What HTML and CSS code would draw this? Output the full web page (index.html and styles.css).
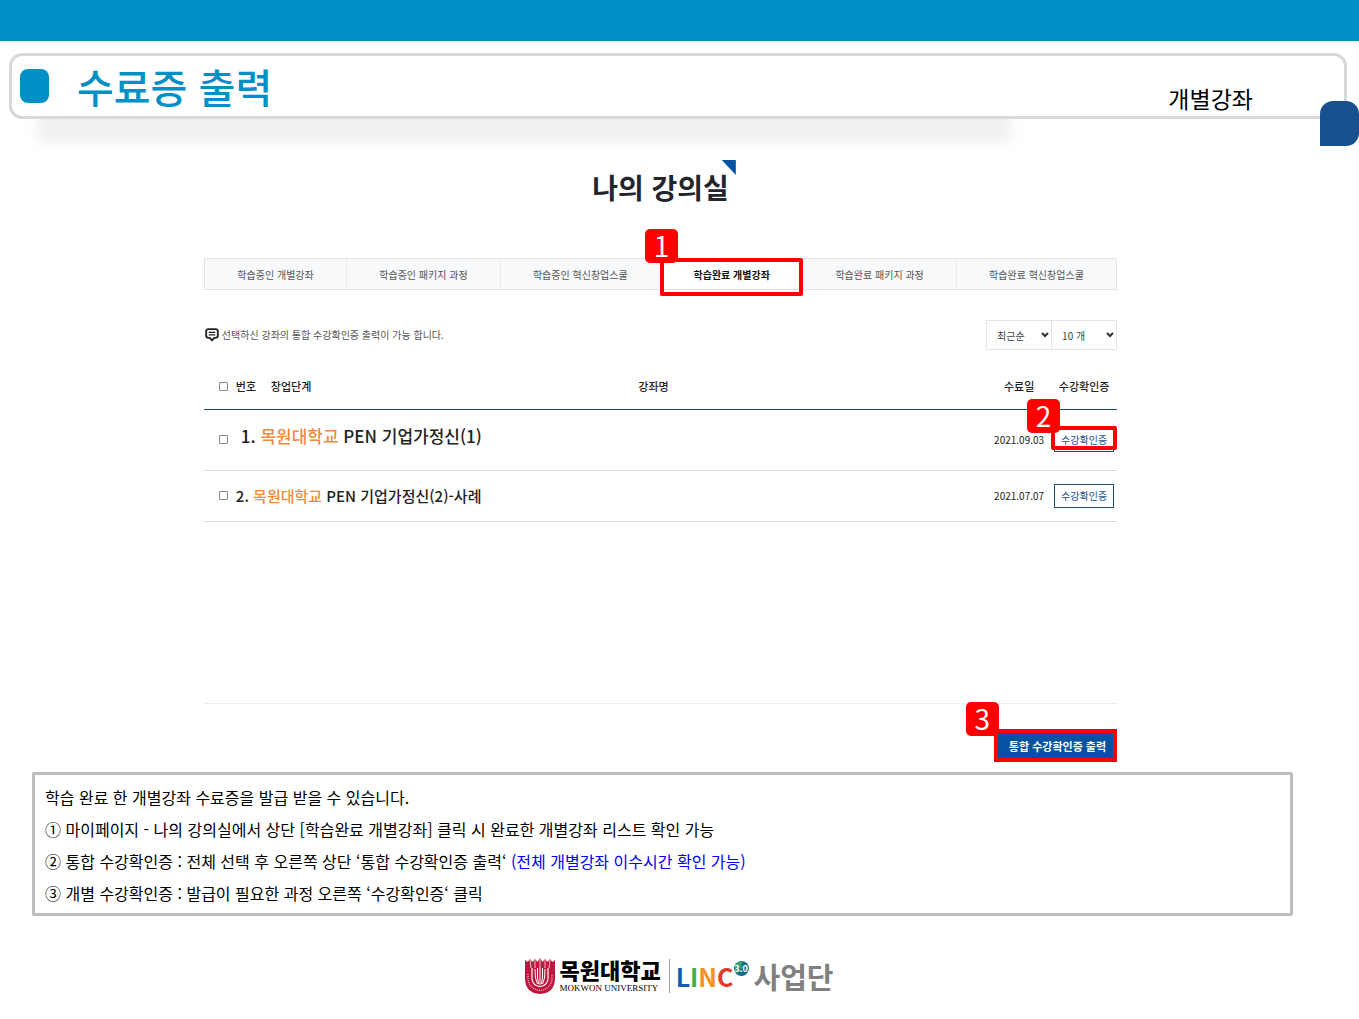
FILE: index.html
```html
<!DOCTYPE html>
<html lang="ko">
<head>
<meta charset="utf-8">
<meta name="viewport" content="width=device-width, initial-scale=1">
<title>수료증 출력</title>
<link rel="stylesheet" href="styles.css">
</head>
<body>
<div class="top-bar"></div>
<header class="title-panel">
  <span class="title-mark"></span>
  <h1 class="title">수료증 출력</h1>
  <p class="subtitle">개별강좌</p>
  <span class="corner-mark"></span>
</header>

<main>
  <section class="classroom">
    <h2 class="room-title"><span class="room-name">나의 강의실</span></h2>

    <nav class="tabs">
      <a class="tab tab-s" href="#">학습중인 개별강좌</a>
      <a class="tab tab-m" href="#">학습중인 패키지 과정</a>
      <a class="tab tab-l" href="#">학습중인 혁신창업스쿨</a>
      <a class="tab tab-s active" href="#">학습완료 개별강좌<span class="frame"><span class="badge">1</span></span></a>
      <a class="tab tab-m" href="#">학습완료 패키지 과정</a>
      <a class="tab tab-l" href="#">학습완료 혁신창업스쿨</a>
    </nav>

    <div class="toolbar">
      <svg class="note-icon" viewBox="0 0 12 12" aria-hidden="true"><path d="M3 1h6q2 0 2 2v3.500q0 2-2 2H8L6 10.500 4 8.500H3q-2 0-2-2V3q0-2 2-2z" fill="none" stroke="#222" stroke-width="1.600"/><path d="M3.200 3.800h5.600M3.200 5.900h5.600" stroke="#222" stroke-width="1"/></svg>
      <p class="note">선택하신 강좌의 통합 수강확인증 출력이 가능 합니다.</p>
      <div class="selects">
        <span class="select-box"><select aria-label="정렬"><option>최근순</option></select><svg class="chevron" viewBox="0 0 8 6" aria-hidden="true"><path d="M1 1l3 3 3-3" fill="none" stroke="#333" stroke-width="2"/></svg></span>
        <span class="select-box"><select aria-label="표시 개수"><option>10 개</option></select><svg class="chevron" viewBox="0 0 8 6" aria-hidden="true"><path d="M1 1l3 3 3-3" fill="none" stroke="#333" stroke-width="2"/></svg></span>
      </div>
    </div>

    <table class="courses">
      <colgroup><col class="c-check"><col class="c-no"><col class="c-step"><col><col class="c-date"><col class="c-cert"></colgroup>
      <thead>
        <tr>
          <th><input type="checkbox" aria-label="전체 선택"></th>
          <th>번호</th><th>창업단계</th><th class="name-head">강좌명</th><th class="date">수료일</th><th>수강확인증</th>
        </tr>
      </thead>
      <tbody>
        <tr class="row-first">
          <td><input type="checkbox" aria-label="1번 강좌 선택"></td>
          <td colspan="3" class="course">1. <em>목원대학교</em> PEN 기업가정신(1)</td>
          <td class="date">2021.09.03</td>
          <td><button type="button" class="cert">수강확인증<span class="frame"><span class="badge">2</span></span></button></td>
        </tr>
        <tr class="row-second">
          <td><input type="checkbox" aria-label="2번 강좌 선택"></td>
          <td colspan="3" class="course">2. <em>목원대학교</em> PEN 기업가정신(2)-사례</td>
          <td class="date">2021.07.07</td>
          <td><button type="button" class="cert">수강확인증</button></td>
        </tr>
      </tbody>
    </table>

    <div class="list-end">
      <button type="button" class="print">통합 수강확인증 출력<span class="frame"><span class="badge">3</span></span></button>
    </div>
  </section>

  <section class="guide">
    <p>학습 완료 한 개별강좌 수료증을 발급 받을 수 있습니다.</p>
    <p>① 마이페이지 - 나의 강의실에서 상단 [학습완료 개별강좌] 클릭 시 완료한 개별강좌 리스트 확인 가능</p>
    <p>② 통합 수강확인증 : 전체 선택 후 오른쪽 상단 ‘통합 수강확인증 출력‘ <span class="accent">(전체 개별강좌 이수시간 확인 가능)</span></p>
    <p>③ 개별 수강확인증 : 발급이 필요한 과정 오른쪽 ‘수강확인증‘ 클릭</p>
  </section>
</main>

<footer class="footer">
  <svg class="crest" viewBox="0 0 30 36" aria-hidden="true">
    <path d="M0 2l2.500 2L5 1l2.500 3L10 1l2.500 3L15 0l2.500 4L20 1l2.500 3L25 1l2.500 3L30 2v18q0 15-15 16Q0 35 0 20z" fill="#bd1740"/>
    <path d="M7 10v11q1 7 8 7.500 7-.5 8-7.500V10" fill="none" stroke="#fff" stroke-width="1.200"/>
    <path d="M3 16v5q1 10 12 11.500 11-1.500 12-11.500v-5" fill="none" stroke="#e9a5b4" stroke-width="1.500" stroke-dasharray="1 1"/>
    <path d="M10 11l.5 9 2 6M12.500 10v9l1 7M15 9v18M17.500 10v9l-1 7M20 11l-.5 9-2 6" fill="none" stroke="#fff" stroke-width="1"/>
    <path d="M5 2l1 8M10 2v8M15 1v8M20 2v8M25 2l-1 8" fill="none" stroke="#f6d3dc" stroke-width=".9"/>
  </svg>
  <div class="university">
    <span class="uni-ko">목원대학교</span>
    <span class="uni-en">MOKWON UNIVERSITY</span>
  </div>
  <div class="linc">
    <span class="linc-word"><span class="l-blue">L</span><span class="l-green">I</span><span class="l-orange">N</span><span class="l-red">C</span></span>
    <span class="globe"><svg viewBox="0 0 15 15" aria-hidden="true"><circle cx="7.500" cy="7.500" r="7.500" fill="#176b8d"/><path d="M1 4Q5-1 9 1L7 4 9 7 5 8 6 11 3 12Q-1 8 1 4zM11 3l3 2 1 4-3-1z" fill="#37a36c"/></svg><span class="globe-text">3.0</span></span>
    <span class="unit">사업단</span>
  </div>
</footer>
</body>
</html>
```
FILE: styles.css
```css
* { box-sizing: border-box; }

body {
  margin: 0;
  background: #fff;
  color: #000;
  font-family: "Noto Sans CJK KR", "Liberation Sans", sans-serif;
}

h1, h2, p { margin: 0; }

button, select, input { font-family: inherit; margin: 0; }

.top-bar { height: 41px; background: #0090c6; }

/* Title panel */
.title-panel {
  position: relative;
  display: flex;
  align-items: center;
  height: 66px;
  margin: 12px 12px 0 9px;
  padding: 0 91px 0 8px;
  border: 3px solid #d8d8d8;
  border-radius: 13px;
  background: #fff;
}

.title-panel::before {
  content: "";
  position: absolute;
  z-index: -1;
  left: 26px;
  right: 25%;
  top: 40px;
  height: 46px;
  background: #f0f0f0;
  filter: blur(6px);
}

.title-panel::after {
  content: "";
  position: absolute;
  z-index: -1;
  inset: 0;
  background: #fff;
}

.title-mark {
  width: 29px;
  height: 34px;
  border-radius: 8px;
  background: #0090c6;
}

.title {
  flex: 1;
  margin-left: 28px;
  color: #0090c6;
  font-size: 40px;
  line-height: 60px;
  font-weight: 500;
}

.subtitle {
  padding-top: 24px;
  font-size: 23px;
  line-height: 34px;
}

.corner-mark {
  position: absolute;
  right: -15px;
  bottom: -30px;
  width: 39px;
  height: 45px;
  border-radius: 13px 13px 13px 0;
  background: #184f8d;
}

/* Classroom page */
.classroom { margin: 41px 17.8% 0 15%; }

.room-title {
  text-align: center;
  font-size: 28px;
  line-height: 54px;
  font-weight: 700;
  color: #222529;
}

.room-name { position: relative; }

.room-name::after {
  content: "";
  position: absolute;
  right: -7px;
  top: -7px;
  width: 14px;
  height: 15px;
  background: #0453a3;
  clip-path: polygon(0 0, 100% 0, 100% 100%);
}

.tabs {
  display: flex;
  height: 32px;
  margin-top: 44px;
  border: 1px solid #e2e4e6;
  background: #f8f9fb;
}

.tab {
  flex: 142 1 0;
  border-right: 1px solid #e8eaec;
  color: #555;
  font-size: 10px;
  line-height: 32px;
  text-align: center;
  text-decoration: none;
  white-space: nowrap;
}

.tab-m { flex-grow: 153; }
.tab-l { flex-grow: 160; }
.tab:last-child { border-right: 0; }

.tab.active {
  position: relative;
  background: #fff;
  color: #111;
  font-weight: 700;
}

/* Red call-out frames and numbers */
.frame {
  position: absolute;
  inset: -1px -1px -7px -1px;
  border: 4px solid #f00;
  border-radius: 2px;
}

.badge {
  position: absolute;
  right: 100%;
  bottom: 100%;
  width: 33px;
  height: 34px;
  margin: 0 -14px -1px 0;
  border-radius: 5px;
  background: #f00;
  color: #fff;
  font-size: 28px;
  line-height: 33px;
  font-weight: 400;
  text-align: center;
}

.toolbar {
  display: flex;
  align-items: center;
  margin-top: 30px;
  color: #555;
}

.note-icon { width: 14px; height: 14px; margin-left: 1px; }

.note {
  flex: 1;
  margin-left: 3px;
  font-size: 10px;
  line-height: 16px;
}

.selects { display: flex; border: 1px solid #e2e4e6; }

.select-box {
  position: relative;
  width: 64px;
}

.select-box + .select-box { border-left: 1px solid #e2e4e6; width: 65px; }

.select-box select {
  display: block;
  width: 100%;
  height: 28px;
  padding: 0 0 0 10px;
  border: 0;
  background: transparent;
  color: #444;
  font-size: 10px;
  appearance: none;
}

.chevron {
  position: absolute;
  right: 2px;
  top: 11px;
  width: 8px;
  height: 6px;
}

.courses {
  width: 100%;
  margin-top: 14px;
  border-collapse: collapse;
  table-layout: fixed;
}

.c-check { width: 32px; }
.c-no { width: 31px; }
.c-step { width: 52px; }
.c-date { width: 75px; }
.c-cert { width: 66px; }

.courses th, .courses td { padding: 0; white-space: nowrap; }

.courses th {
  height: 45px;
  border-bottom: 1px solid #1b4b63;
  color: #222;
  font-size: 11px;
  font-weight: 500;
  text-align: left;
}

.courses th:nth-last-child(-n+2), .courses td:nth-last-child(-n+2) { text-align: center; }

.courses .name-head { padding-left: 12px; text-align: center; }
.courses th:nth-child(3) { padding-left: 4px; }
.courses .date { padding-left: 11px; }

.courses td {
  border-bottom: 1px solid #ddd;
  color: #222;
  font-size: 10px;
}

.courses input {
  display: block;
  width: 9px;
  height: 9px;
  margin-left: 15px;
  border: 1px solid #888;
  border-radius: 1px;
  appearance: none;
  background: #fff;
}

.row-first { height: 61px; }
.row-second { height: 51px; }

.courses .course { font-size: 15px; font-weight: 500; }
.courses .row-first .course { padding: 0 0 8px 5px; font-size: 17px; }

.course em { color: #ee8b3c; font-style: normal; }

.cert {
  position: relative;
  width: 60px;
  height: 24px;
  padding: 0;
  border: 1px solid #1b4b73;
  background: #fff;
  color: #1d4f8c;
  font-size: 10px;
}

.cert .frame { inset: -3px -4px 1px -4px; }
.cert .badge { margin: 0 -5px -3px 0; }

.list-end {
  display: flex;
  justify-content: flex-end;
  margin-top: 181px;
  padding-top: 25px;
  border-top: 1px solid #eee;
}

.print {
  position: relative;
  height: 33px;
  padding: 2px 11px 0 15px;
  border: 0;
  background: #0453a3;
  color: #fff;
  font-size: 11px;
  font-weight: 700;
}

.print .frame { inset: 0; }
.print .badge { margin: 0 -1px -3px 0; }

/* Step-by-step guide */
.guide {
  margin: 10px 66px 0 32px;
  padding: 6px 10px 4px;
  border: 3px solid #bdbdbd;
  border-radius: 2px;
  font-size: 16px;
  line-height: 32px;
}

.accent { color: #00f; }

/* Footer logos */
.footer {
  display: flex;
  justify-content: center;
  align-items: center;
  height: 36px;
  margin: 42px 0 24px;
}

.crest { width: 30px; height: 36px; }

.university {
  display: flex;
  flex-direction: column;
  margin-left: 4px;
  padding-right: 8px;
  border-right: 1px solid #999;
}

.uni-ko { font-size: 22px; line-height: 20px; font-weight: 900; }

.uni-en {
  margin-top: 5px;
  font-family: "Liberation Serif", serif;
  font-size: 9px;
  line-height: 9px;
}

.linc { display: flex; align-items: center; margin-left: 6px; }

.linc-word {
  font-size: 25px;
  line-height: 36px;
  font-weight: 700;
}

.l-blue { color: #145fa8; }
.l-green { color: #43ad49; }
.l-orange { color: #f4931e; }
.l-red { color: #df3a2b; }

.globe { position: relative; align-self: flex-start; width: 15px; height: 15px; margin-top: 3px; }
.globe svg { display: block; }

.globe-text {
  position: absolute;
  inset: 0;
  color: #fff;
  font-size: 9px;
  line-height: 15px;
  font-weight: 700;
  text-align: center;
}

.unit {
  margin-left: 5px;
  color: #808080;
  font-size: 29px;
  line-height: 34px;
  font-weight: 700;
}
```
